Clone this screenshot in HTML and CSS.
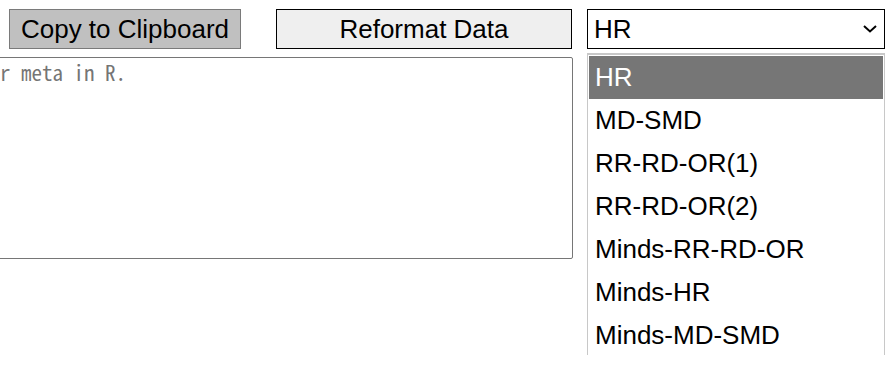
FILE: index.html
```html
<!DOCTYPE html>
<html lang="en">

<head>
  <meta charset="UTF-8">
  <meta name="viewport" content="width=device-width, initial-scale=1.0">
  <title>Meta Reformatter</title>
  <link rel="stylesheet" href="styles.css">
</head>

<body>
  <div class="toolbar">
    <button class="btn copy">Copy to Clipboard</button>
    <button class="btn reformat">Reformat Data</button>
    <div class="select">
      <span class="select-value">HR</span>
      <svg class="chevron" width="14" height="8" viewBox="0 0 14 8">
        <polyline points="1,1 7,6.5 13,1" fill="none" stroke="#000" stroke-width="2"/>
      </svg>
    </div>
  </div>

  <div class="editor">
    <textarea class="data" placeholder="Paste your data for meta in R."></textarea>
  </div>

  <ul class="options">
    <li class="active">HR</li>
    <li>MD-SMD</li>
    <li>RR-RD-OR(1)</li>
    <li>RR-RD-OR(2)</li>
    <li>Minds-RR-RD-OR</li>
    <li>Minds-HR</li>
    <li>Minds-MD-SMD</li>
  </ul>
</body>

</html>
```

FILE: styles.css
```css
/* page */

body {
  margin: 0;
  padding: 9px 0 0 9px;
  font-family: "Liberation Sans", Arial, sans-serif;
  background-color: #fff;
  overflow: hidden;
}

.toolbar {
  display: flex;
  align-items: flex-start;
}

.btn {
  height: 40px;
  padding: 0;
  font-family: "Liberation Sans", Arial, sans-serif;
  font-size: 26px;
  color: #000;
  border-radius: 0;
}

.btn.copy {
  width: 232px;
  background-color: #c0c0c0;
  border: 1px solid #7a7a7a;
}

.btn.reformat {
  width: 296px;
  margin-left: 35px;
  background-color: #efefef;
  border: 1px solid #000;
}

.select {
  width: 298px;
  height: 40px;
  margin-left: 15px;
  box-sizing: border-box;
  border: 1px solid #000;
  display: flex;
  align-items: center;
  justify-content: space-between;
  padding: 0 7px 0 6px;
  font-size: 26px;
}

.chevron {
  display: block;
}

.editor {
  margin-top: 8px;
  margin-left: -201px;
}

.data {
  display: block;
  width: 765px;
  height: 202px;
  box-sizing: border-box;
  margin: 0;
  padding: 2px;
  border: 1px solid #767676;
  border-radius: 2px;
  resize: none;
  font-family: "Noto Sans Mono CJK JP", "Liberation Mono", monospace;
  font-size: 21px;
  line-height: 25px;
}

.data::placeholder {
  color: #757575;
}

/* open dropdown of the select */

.options {
  position: absolute;
  top: 53px;
  left: 587px;
  width: 298px;
  height: 302px;
  box-sizing: border-box;
  margin: 0;
  padding: 1px 1px 0;
  list-style: none;
  border: 1px solid #c8c8c8;
  border-top: 2px solid #c8c8c8;
  border-bottom: none;
  background-color: #fff;
  overflow: hidden;
}

.options li {
  height: 43px;
  line-height: 43px;
  padding-left: 6px;
  font-size: 26px;
  color: #000;
}

.options li.active {
  background-color: #767676;
  color: #fff;
}
```
